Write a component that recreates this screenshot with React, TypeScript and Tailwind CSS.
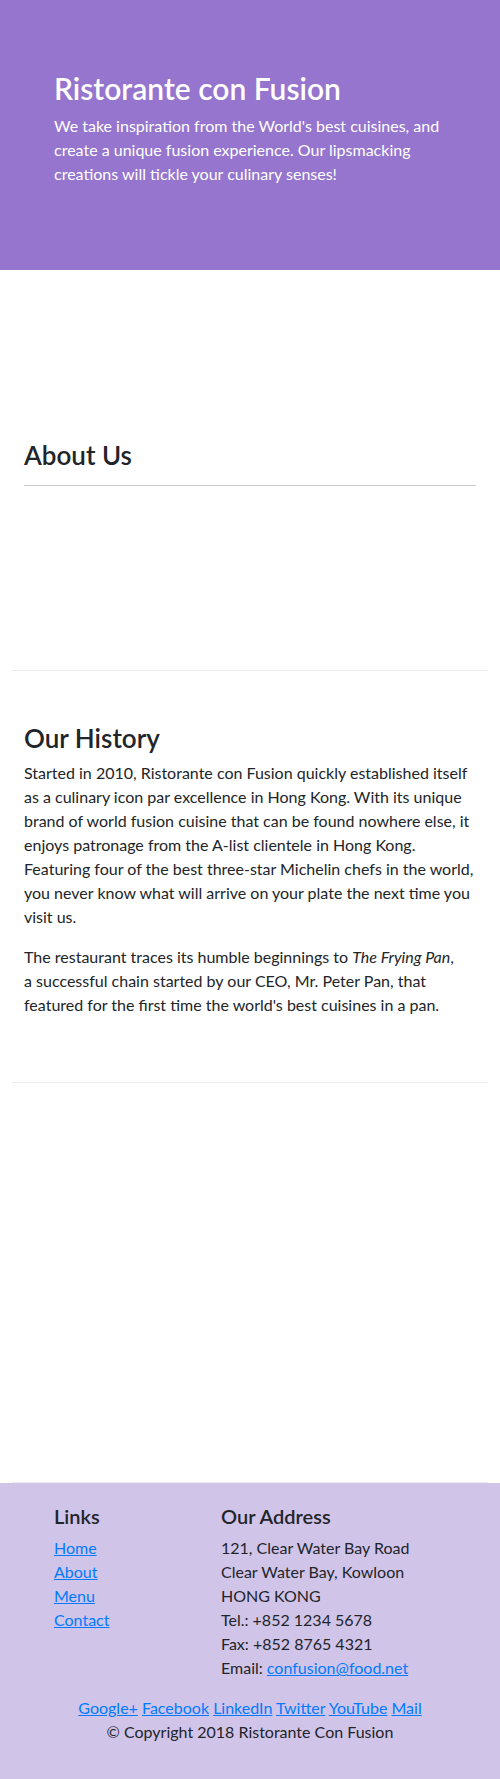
const socials = ['Google+', 'Facebook', 'LinkedIn', 'Twitter', 'YouTube', 'Mail']

export default function App() {
  return (
    <div className="font-['Lato',sans-serif] text-[16px] leading-6 text-[#212529] bg-white">
      <header className="h-[270px] bg-[#9575cd] px-[54px] pt-[70px] text-white">
        <h1 className="text-[30px] leading-9 font-semibold mb-2">Ristorante con Fusion</h1>
        <p>
          We take inspiration from the World's best cuisines, and create a unique fusion experience. Our
          lipsmacking creations will tickle your culinary senses!
        </p>
      </header>

      <div className="mx-3 h-[401px] border-b border-[#ececec] px-3 pt-[170px]">
        <h2 className="text-[26px] leading-[31px] font-semibold">About Us</h2>
        <hr className="mt-[14px] border-t border-[#c8c8c8]" />
      </div>

      <div className="mx-3 border-b border-[#ececec] px-3 pt-[52px] pb-[65px]">
        <h2 className="text-[26px] leading-[31px] font-semibold mb-[7px]">Our History</h2>
        <p className="mb-4">
          Started in 2010, Ristorante con Fusion quickly established itself as a culinary icon par excellence in
          Hong Kong. With its unique brand of world fusion cuisine that can be found nowhere else, it enjoys
          patronage from the A-list clientele in Hong Kong. Featuring four of the best three-star Michelin chefs in
          the world, you never know what will arrive on your plate the next time you visit us.
        </p>
        <p>
          The restaurant traces its humble beginnings to <em>The Frying Pan</em>,<br />
          a successful chain started by our CEO, Mr. Peter Pan, that featured for the first time the world's best
          cuisines in a pan.
        </p>
      </div>

      <div className="mx-3 h-[400px] border-b border-[#ececec]" />

      <footer className="h-[296px] bg-[#d1c4e9] px-[54px] pt-[21px]">
        <div className="flex">
          <div className="w-[167px]">
            <h5 className="text-[20px] leading-6 font-semibold mb-2">Links</h5>
            <ul>
              <li><a href="#" className="text-[#007bff] underline">Home</a></li>
              <li><a href="#" className="text-[#007bff] underline">About</a></li>
              <li><a href="#" className="text-[#007bff] underline">Menu</a></li>
              <li><a href="#" className="text-[#007bff] underline">Contact</a></li>
            </ul>
          </div>
          <div>
            <h5 className="text-[20px] leading-6 font-semibold mb-2">Our Address</h5>
            <address className="not-italic">
              121, Clear Water Bay Road<br />
              Clear Water Bay, Kowloon<br />
              HONG KONG<br />
              Tel.: +852 1234 5678<br />
              Fax: +852 8765 4321<br />
              Email: <a href="#" className="text-[#007bff] underline">confusion@food.net</a>
            </address>
          </div>
        </div>
        <div className="mt-4 text-center">
          {socials.map((s, i) => (
            <span key={s}>
              <a href="#" className="text-[#007bff] underline">{s}</a>
              {i < socials.length - 1 && ' '}
            </span>
          ))}
        </div>
        <p className="text-center">© Copyright 2018 Ristorante Con Fusion</p>
      </footer>
    </div>
  )
}
